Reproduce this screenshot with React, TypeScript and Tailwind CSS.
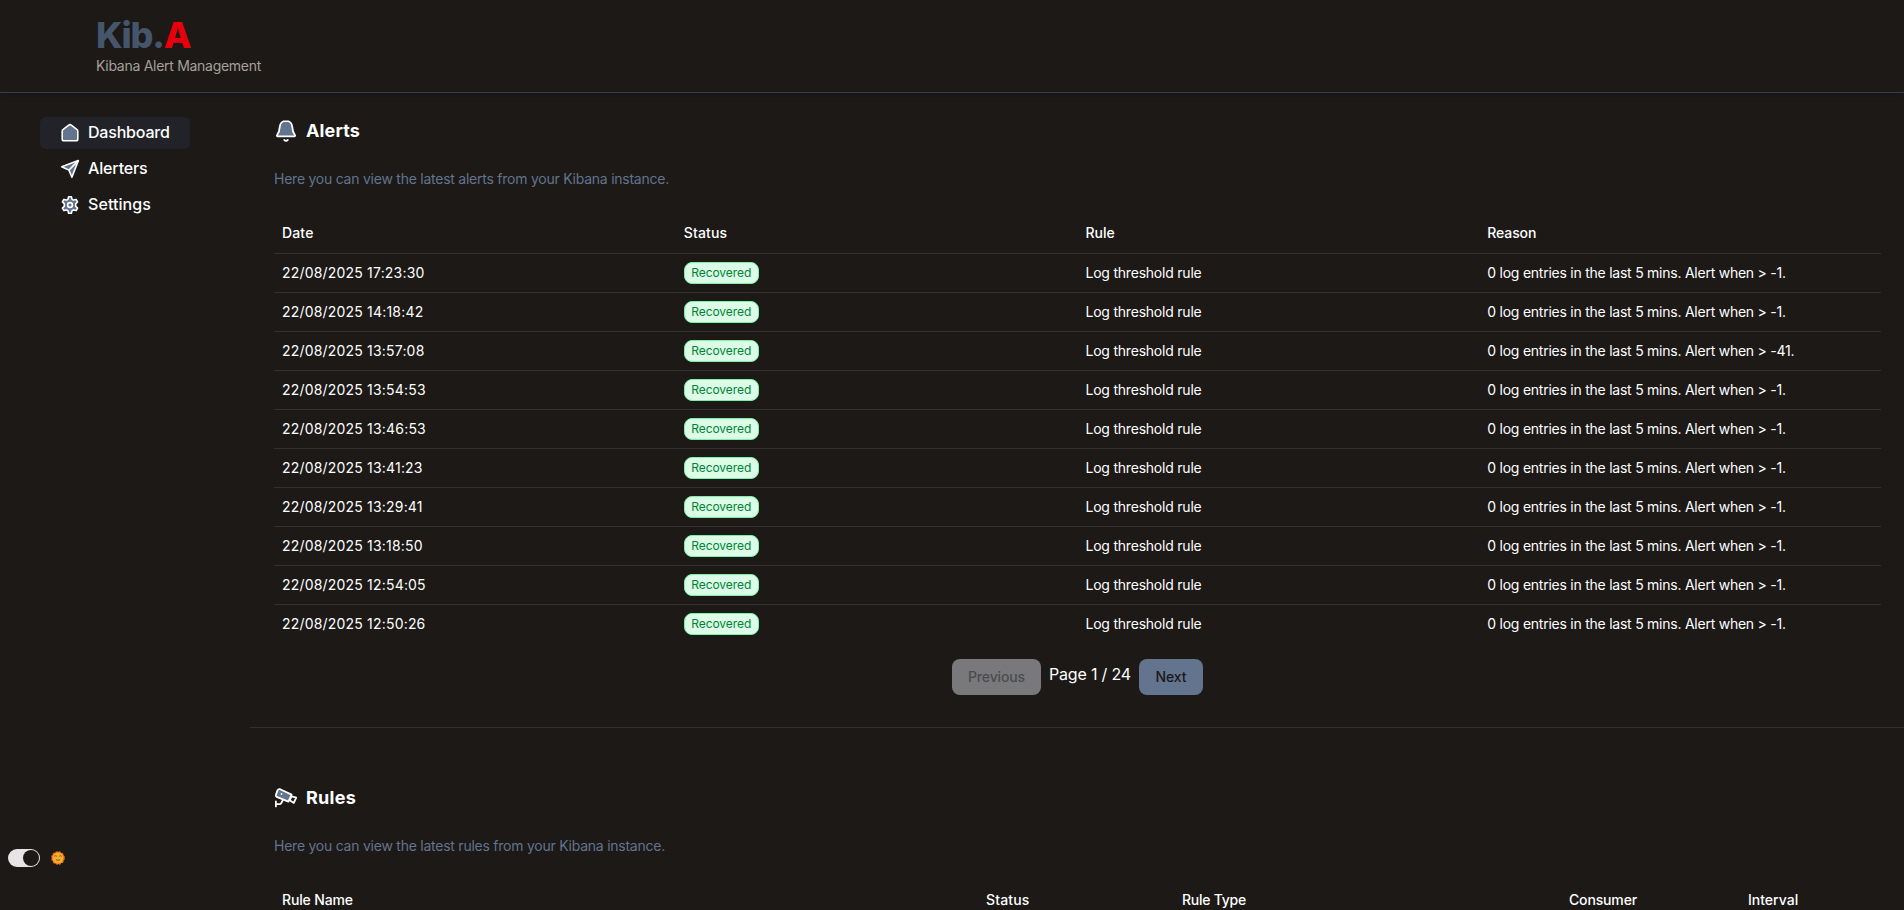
import type { ReactNode } from "react";

const alerts = [
  ["22/08/2025 17:23:30", "-1"],
  ["22/08/2025 14:18:42", "-1"],
  ["22/08/2025 13:57:08", "-41"],
  ["22/08/2025 13:54:53", "-1"],
  ["22/08/2025 13:46:53", "-1"],
  ["22/08/2025 13:41:23", "-1"],
  ["22/08/2025 13:29:41", "-1"],
  ["22/08/2025 13:18:50", "-1"],
  ["22/08/2025 12:54:05", "-1"],
  ["22/08/2025 12:50:26", "-1"],
];

function HomeIcon() {
  return (
    <svg viewBox="0 0 20 20" className="size-5 fill-[#62748e] stroke-white" strokeWidth="1.6" strokeLinejoin="round">
      <path d="M2.2 8.2c0-.8.3-1.4 1-1.9l5.5-4.200c.8-.6 1.800-.6 2.600 0l5.500 4.200c.7.5 1 1.100 1 1.900v7.700c0 1.100-.7 1.800-1.800 1.800h-12c-1.100 0-1.800-.7-1.800-1.800z" />
    </svg>
  );
}

function SendIcon() {
  return (
    <svg viewBox="0 0 20 20" className="size-5 fill-[#62748e] stroke-white" strokeWidth="1.6" strokeLinejoin="round">
      <path d="M18.300 1.600 1.700 7.700l7.200 3.400 3 7.200z" />
      <path d="m8.900 11.100 9.400-9.500" />
    </svg>
  );
}

function GearIcon() {
  return (
    <svg viewBox="0 0 20 20" className="size-5 fill-[#62748e] stroke-white" strokeWidth="1.6" strokeLinejoin="round">
      <path d="M8.600 1.800h2.800l.7 2.600 1.300.7 2.700-.7 1.500 2.500-1.900 1.900v2.400l1.900 1.900-1.500 2.500-2.700-.7-1.300.7-.7 2.600H8.600l-.7-2.600-1.300-.7-2.700.7-1.500-2.500 1.900-1.900V8.800L2.400 6.900l1.500-2.500 2.700.7 1.300-.7z" />
      <circle cx="10" cy="10" r="2.400" />
    </svg>
  );
}

function BellIcon() {
  return (
    <svg viewBox="0 0 24 24" className="size-6 stroke-white" strokeWidth="1.800" strokeLinecap="round" strokeLinejoin="round">
      <path className="fill-[#62748e]" d="M12 1.900c-3.700 0-6.100 2.700-6.300 6.200-.2 4.400-1.200 6.100-2.600 7.900-.5.700-.2 1.300.6 1.300h16.600c.8 0 1.100-.6.6-1.300-1.400-1.800-2.400-3.500-2.600-7.900-.2-3.500-2.600-6.200-6.300-6.200z" />
      <path className="fill-none" d="M10.200 20.900c1 1.200 2.600 1.200 3.600 0" />
    </svg>
  );
}

function CameraIcon() {
  return (
    <svg viewBox="0 0 24 24" className="size-6 stroke-white" strokeWidth="1.800" strokeLinecap="round" strokeLinejoin="round">
      <path className="fill-none" d="M1.900 15.400v5M1.900 18.200h3.700c.7 0 1.100-.3 1.500-.9l1.600-2.800" />
      <path className="fill-[#62748e]" d="M6.100 3.200 17.600 8.600l-3.200 7L2.700 10.900c-.8-.4-1.100-1.200-.8-2l1.600-4.500c.4-1.100 1.500-1.600 2.600-1.200z" />
      <path className="fill-[#1c1917]" d="m17.600 10.300 4.600 1.300-2.400 5.300-4.100-2.600z" />
      <path className="fill-none" d="M7.500 8h.01" />
    </svg>
  );
}

function SunFace() {
  return (
    <svg viewBox="0 0 14 14" className="size-3.5">
      <circle cx="7" cy="7" r="6.200" className="fill-[#ef8a22] stroke-[#e8731c]" strokeWidth="1.200" strokeDasharray="2 1.250" />
      <circle cx="7" cy="7" r="5.200" className="fill-[#f8ae2c]" />
      <path d="M3.400 5.200c.7-.7 1.500-.7 2.200 0M8.400 5.200c.7-.7 1.500-.7 2.200 0M5.200 8.700c1.100.9 2.500.9 3.600 0" className="fill-none stroke-[#704214]" strokeWidth=".8" strokeLinecap="round" />
    </svg>
  );
}

function NavItem({ icon, active, children }: { icon: ReactNode; active?: boolean; children: ReactNode }) {
  return (
    <a className={`flex h-8 items-center gap-2 rounded-md pl-5 text-base font-medium ${active ? "bg-[#212329]" : ""}`}>
      {icon}
      {children}
    </a>
  );
}

function SectionTitle({ icon, title, tracking, text }: { icon: ReactNode; title: string; tracking: string; text: string }) {
  return (
    <>
      <h2 className={`flex h-7 items-center gap-2 text-lg font-bold ${tracking}`}>
        {icon}
        {title}
      </h2>
      <p className="mt-6 text-sm tracking-[-0.243px] text-[#62748e]">{text}</p>
    </>
  );
}

export default function App() {
  return (
    <div className="flex h-[910px] flex-col overflow-hidden bg-[#1c1917] font-['Inter',sans-serif] text-white">
      <header className="h-[93px] shrink-0 border-b border-[#314158] pt-[15px] pl-24 shadow-md">
        <h1 className="text-4xl font-extrabold tracking-[-1.2px] text-[#45556c]">
          Kib.<span className="text-[#e7000b]">A</span>
        </h1>
        <p className="mt-px text-sm tracking-[-0.284px] text-[#a6a09b]">Kibana Alert Management</p>
      </header>

      <div className="flex min-h-0 flex-1">
        <aside className="flex w-[250px] shrink-0 flex-col justify-between pt-6 pb-[43px]">
          <nav className="ml-10 flex w-[150px] flex-col gap-1">
            <NavItem icon={<HomeIcon />} active>
              <span className="pb-0.5 tracking-[-0.2px]">Dashboard</span>
            </NavItem>
            <NavItem icon={<SendIcon />}>
              <span className="pb-0.5 tracking-[-0.15px]">Alerters</span>
            </NavItem>
            <NavItem icon={<GearIcon />}>
              <span className="pb-0.5 tracking-[0.08px]">Settings</span>
            </NavItem>
          </nav>
          <div className="flex items-center pl-2">
            <div className="flex h-[18px] w-8 items-center justify-end rounded-full bg-[#e7e5e4] pr-px">
              <div className="size-4 rounded-full bg-[#1c1917]" />
            </div>
            <div className="ml-[11px]">
              <SunFace />
            </div>
          </div>
        </aside>

        <main className="flex min-w-0 flex-1 flex-col">
          <section className="h-[635px] shrink-0 border-b border-white/10 pt-6 pr-[23px] pl-6">
            <SectionTitle
              icon={<BellIcon />}
              title="Alerts"
              tracking="tracking-[0.12px]"
              text="Here you can view the latest alerts from your Kibana instance."
            />
            <div className="mt-6 text-sm">
              <div className="grid h-[41px] grid-cols-4 items-center border-b border-white/10 font-medium">
                <div className="pl-2 tracking-[0.15px]">Date</div>
                <div className="pl-2 tracking-[0.15px]">Status</div>
                <div className="pl-2">Rule</div>
                <div className="pl-2 tracking-[-0.1px]">Reason</div>
              </div>
              {alerts.map(([date, threshold]) => (
                <div key={date} className="grid h-[39px] grid-cols-4 items-center border-b border-white/10 last:h-[38px] last:border-b-0">
                  <div className="pl-2 tracking-[0.19px]">{date}</div>
                  <div className="flex pl-2">
                    <span className="flex h-[22px] w-[75px] items-center justify-center rounded-lg border border-[#7bf1a8] bg-[#dcfce7] text-xs tracking-[-0.06px] text-[#008236]">
                      Recovered
                    </span>
                  </div>
                  <div className="pl-2 tracking-[-0.22px]">Log threshold rule</div>
                  <div className="pl-2 tracking-[-0.242px]">
                    0 log entries in the last 5 mins. Alert when &gt; {threshold}.
                  </div>
                </div>
              ))}
            </div>
            <div className="mt-4 flex justify-center gap-2">
              <button className="h-9 w-[89px] rounded-lg bg-[#79797b] text-sm font-medium tracking-[-0.13px] text-[#4a4b4f]">
                Previous
              </button>
              <span className="w-[82px] pt-[3px] text-center whitespace-nowrap tracking-[-0.178px]">Page 1 / 24</span>
              <button className="h-9 w-16 rounded-lg bg-[#62748e] text-sm font-medium tracking-[-0.08px] text-[#1c1917]">
                Next
              </button>
            </div>
          </section>

          <section className="pt-14 pr-[23px] pl-6">
            <SectionTitle
              icon={<CameraIcon />}
              title="Rules"
              tracking="tracking-[0.25px]"
              text="Here you can view the latest rules from your Kibana instance."
            />
            <div className="mt-6 grid h-[39px] grid-cols-[704px_196px_387px_179px_1fr] items-center text-sm font-medium">
              <div className="pl-2 tracking-[-0.14px]">Rule Name</div>
              <div className="pl-2 tracking-[0.15px]">Status</div>
              <div className="pl-2 tracking-[-0.24px]">Rule Type</div>
              <div className="pl-2 tracking-[-0.15px]">Consumer</div>
              <div className="pl-2">Interval</div>
            </div>
          </section>
        </main>
      </div>
    </div>
  );
}
